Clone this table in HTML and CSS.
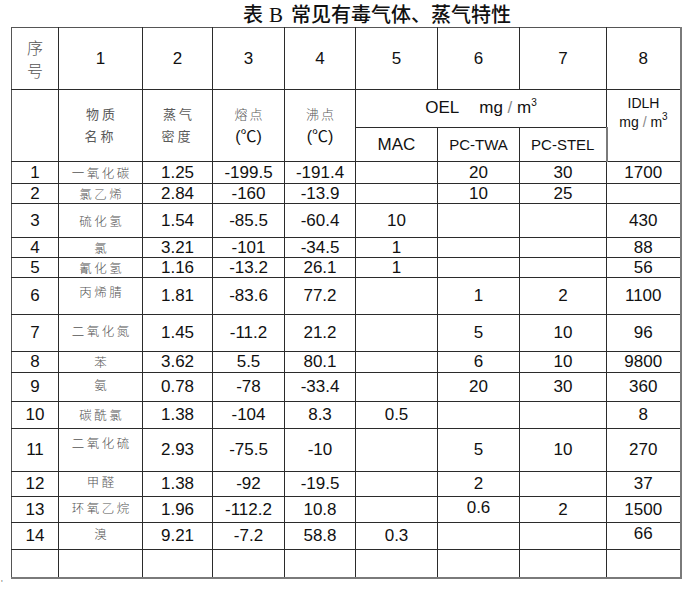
FILE: index.html
```html
<!DOCTYPE html>
<html lang="zh">
<head>
<meta charset="utf-8">
<title>表B 常见有毒气体、蒸气特性</title>
<link rel="stylesheet" href="styles.css">
</head>
<body>
<div class="page">
  <h1 class="title"><span>表</span><span class="serif">B</span><span>常见有毒气体、蒸气特性</span></h1>
  <table class="grid">
    <colgroup>
      <col class="c0"><col class="c1"><col class="c2"><col class="c3"><col class="c4">
      <col class="c5"><col class="c6"><col class="c7"><col class="c8">
    </colgroup>
    <thead>
      <tr class="h62">
        <th class="cn stack">序<br>号</th>
        <th>1</th><th>2</th><th>3</th><th>4</th><th>5</th><th>6</th><th>7</th><th>8</th>
      </tr>
      <tr class="h38">
        <th rowspan="2"></th>
        <th rowspan="2" class="cn hd">物质<br>名称</th>
        <th rowspan="2" class="cn hd">蒸气<br>密度</th>
        <th rowspan="2" class="hd2"><span class="cn">熔点</span><br><span class="unit">(℃)</span></th>
        <th rowspan="2" class="hd2"><span class="cn">沸点</span><br><span class="unit">(℃)</span></th>
        <th colspan="3" class="oel">OEL<span class="sp"></span>mg <span class="sl">/</span> m<sup>3</sup></th>
        <th rowspan="2" class="idlh">IDLH<br><span class="small">mg <span class="sl">/</span> m<sup>3</sup></span></th>
      </tr>
      <tr class="h34">
        <th class="mac">MAC</th>
        <th class="pc">PC-TWA</th>
        <th class="pc">PC-STEL</th>
      </tr>
    </thead>
    <tbody>
      <tr class="h22"><td>1</td><td class="nm">一氧化碳</td><td>1.25</td><td>-199.5</td><td>-191.4</td><td></td><td>20</td><td>30</td><td>1700</td></tr>
      <tr class="h20"><td>2</td><td class="nm">氯乙烯</td><td>2.84</td><td>-160</td><td>-13.9</td><td></td><td>10</td><td>25</td><td></td></tr>
      <tr class="h34"><td>3</td><td class="nm">硫化氢</td><td>1.54</td><td>-85.5</td><td>-60.4</td><td>10</td><td></td><td></td><td>430</td></tr>
      <tr class="h20"><td>4</td><td class="nm">氯</td><td>3.21</td><td>-101</td><td>-34.5</td><td>1</td><td></td><td></td><td>88</td></tr>
      <tr class="h20"><td>5</td><td class="nm">氰化氢</td><td>1.16</td><td>-13.2</td><td>26.1</td><td>1</td><td></td><td></td><td>56</td></tr>
      <tr class="h37"><td>6</td><td class="nm top">丙烯腈</td><td>1.81</td><td>-83.6</td><td>77.2</td><td></td><td>1</td><td>2</td><td>1100</td></tr>
      <tr class="h37"><td>7</td><td class="nm top2">二氧化氮</td><td>1.45</td><td>-11.2</td><td>21.2</td><td></td><td>5</td><td>10</td><td>96</td></tr>
      <tr class="h21"><td>8</td><td class="nm">苯</td><td>3.62</td><td>5.5</td><td>80.1</td><td></td><td>6</td><td>10</td><td>9800</td></tr>
      <tr class="h29"><td>9</td><td class="nm up">氨</td><td>0.78</td><td>-78</td><td>-33.4</td><td></td><td>20</td><td>30</td><td>360</td></tr>
      <tr class="h27"><td>10</td><td class="nm">碳酰氯</td><td>1.38</td><td>-104</td><td>8.3</td><td>0.5</td><td></td><td></td><td>8</td></tr>
      <tr class="h43"><td>11</td><td class="nm top">二氧化硫</td><td>2.93</td><td>-75.5</td><td>-10</td><td></td><td>5</td><td>10</td><td>270</td></tr>
      <tr class="h25"><td>12</td><td class="nm up">甲醛</td><td>1.38</td><td>-92</td><td>-19.5</td><td></td><td>2</td><td></td><td>37</td></tr>
      <tr class="h26"><td>13</td><td class="nm up">环氧乙烷</td><td>1.96</td><td>-112.2</td><td>10.8</td><td></td><td class="up">0.6</td><td>2</td><td>1500</td></tr>
      <tr class="h27"><td>14</td><td class="nm up">溴</td><td>9.21</td><td>-7.2</td><td>58.8</td><td>0.3</td><td></td><td></td><td class="up">66</td></tr>
      <tr class="h28 last"><td></td><td></td><td></td><td></td><td></td><td></td><td></td><td></td><td></td></tr>
    </tbody>
  </table>
  <span class="tick">'</span>
</div>
</body>
</html>
```

FILE: styles.css
```css
html, body {
  margin: 0;
  padding: 0;
  background: #ffffff;
}

.page {
  position: relative;
  width: 687px;
  height: 589px;
  font-family: "Liberation Sans", Arial, "Noto Sans CJK SC", sans-serif;
  color: #111;
}

.title {
  margin: 0;
  height: 27px;
  padding: 1px 0 0 243px;
  box-sizing: border-box;
  font-family: "Noto Sans CJK SC", sans-serif;
  font-weight: 500;
  font-size: 20px;
  line-height: 25px;
  color: #111;
  white-space: nowrap;
}

.title .serif {
  font-family: "Liberation Serif", "Times New Roman", serif;
  font-weight: 400;
  font-size: 21px;
  margin: 0 8px 0 6px;
}

.grid {
  margin-left: 11px;
  border-collapse: collapse;
  table-layout: fixed;
  width: 669px;
}

.c0 { width: 47px; }
.c1 { width: 84px; }
.c2 { width: 70px; }
.c3 { width: 72px; }
.c4 { width: 71px; }
.c5 { width: 82px; }
.c6 { width: 82px; }
.c7 { width: 87px; }
.c8 { width: 74px; }

.grid th,
.grid td {
  border: 1px solid #2b2b2b;
  padding: 0;
  text-align: center;
  vertical-align: middle;
  font-weight: 400;
  font-size: 17px;
  line-height: 18px;
  color: #111;
  overflow: hidden;
}

.grid tr > *:first-child { border-left-color: #555; }
.grid tr > *:last-child { border-right: 2px solid #7a7a7a; }
.grid thead tr:first-child > * { border-top-color: #555; }
.grid tr.last > * { border-bottom: 2px solid #7a7a7a; }

.h62 { height: 62px; }
.h43 { height: 43px; }
.h38 { height: 38px; }
.h37 { height: 37px; }
.h34 { height: 34px; }
.h29 { height: 29px; }
.h28 { height: 28px; }
.h27 { height: 27px; }
.h26 { height: 26px; }
.h25 { height: 25px; }
.h22 { height: 22px; }
.h21 { height: 21px; }
.h20 { height: 20px; }

.cn {
  font-family: "Noto Sans CJK SC", sans-serif;
  font-weight: 300;
  color: #555;
}

.grid th.stack {
  font-size: 16px;
  line-height: 23px;
  color: #555;
  font-weight: 300;
}

.grid th.hd {
  font-size: 13px;
  line-height: 22px;
  letter-spacing: 3px;
  text-indent: 3px;
  color: #5a5a5a;
  padding-bottom: 2px;
}

.grid th.hd2 {
  line-height: 23px;
  padding-bottom: 2px;
}

.hd2 .cn {
  font-size: 13px;
  letter-spacing: 2px;
  margin-left: 2px;
  color: #5a5a5a;
}

.unit {
  font-size: 16px;
}

.grid th.oel {
  font-size: 17px;
  padding-bottom: 2px;
}

.sp {
  display: inline-block;
  width: 20px;
}

.sl {
  color: #888;
  font-weight: 300;
}

sup {
  font-size: 10px;
  line-height: 0;
  vertical-align: 7px;
}

.grid th.idlh {
  vertical-align: top;
  padding-top: 4px;
  font-size: 14px;
  line-height: 19px;
}

.idlh .small {
  font-size: 14px;
}

.grid th.mac {
  font-size: 17px;
}

.grid th.pc {
  font-size: 15px;
}

.grid td.nm {
  font-family: "Noto Sans CJK SC", sans-serif;
  font-weight: 300;
  font-size: 12.5px;
  letter-spacing: 2.5px;
  text-indent: 2.5px;
  color: #555;
}

.grid td.top {
  vertical-align: top;
  padding-top: 5px;
}

.grid td.top2 {
  vertical-align: top;
  padding-top: 7px;
}

.grid td.up {
  padding-bottom: 4px;
}

.tick {
  position: absolute;
  left: 1px;
  top: 578px;
  font-size: 9px;
  color: #777;
}
```
